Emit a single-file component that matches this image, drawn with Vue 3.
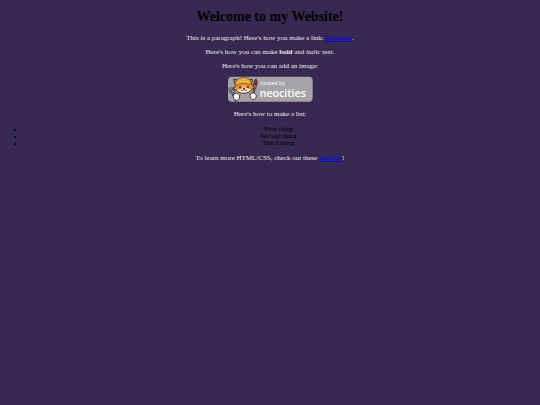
<script setup>
const things = ['First thing', 'Second thing', 'Third thing']
</script>

<template>
  <main class="page">
    <h1>Welcome to my Website!</h1>

    <p>This is a paragraph! Here's how you make a link: <a href="#neocities">Neocities</a>.</p>

    <p>Here's how you can make <strong>bold</strong> and <em>italic</em> text.</p>

    <p>Here's how you can add an image:</p>

    <!-- Hosted by Neocities badge -->
    <svg class="badge" viewBox="0 0 255 78" role="img" aria-label="Hosted by Neocities">
      <rect x="0" y="2" width="254" height="75" rx="12" fill="#a5a3a8" />
      <!-- fork -->
      <path d="M12 46 L25 76" stroke="#30303a" stroke-width="8" />
      <path d="M3 36 L7 47 Q13 54 19 45 L18 33 M10 34 L14 50" fill="none" stroke="#30303a" stroke-width="6" />
      <path d="M3 36 L7 47 Q13 52 19 45 L18 33 M10 34 L14 50 L23 74" fill="none" stroke="#a0a6b0" stroke-width="3" />
      <!-- brush -->
      <path d="M80 36 L73 65" stroke="#3d2228" stroke-width="6" />
      <path d="M80 35 L74 62" stroke="#a84a3c" stroke-width="3" />
      <path d="M77 24 L86 26 L83 38 L76 36 Z" fill="#8e8588" stroke="#302630" stroke-width="2" />
      <path d="M78 25 Q76 16 84 8 Q90 17 86 27 Z" fill="#8f2830" stroke="#4b1b23" stroke-width="2" />
      <!-- head -->
      <path d="M22 27 L17 10 L32 13 Q46 3 61 12 L73 10 L71 26 L79 35 L71 41 Q65 51 48 52 Q30 51 25 43 L15 37 L22 32 Z" fill="#ef942f" stroke="#4a2b25" stroke-width="3" />
      <path d="M47 29 L42 39 L28 42 Q33 50 48 50 Q65 49 69 40 L55 37 Z" fill="#fff2df" />
      <path d="M21 26 Q24 8 41 5 Q63 2 70 19 L66 26 Q43 18 25 29 Z" fill="#e2a93a" stroke="#6a4922" stroke-width="2" />
      <path d="M28 21 Q44 11 63 20 M33 13 Q48 7 57 12" fill="none" stroke="#f4cc60" stroke-width="2" />
      <circle cx="36" cy="34" r="3" fill="#342522" />
      <circle cx="60" cy="33" r="3" fill="#342522" />
      <path d="M45 36 L51 36 L48 40 Z M40 43 Q46 45 48 40 Q52 45 57 42" fill="#b64b3e" stroke="#4a2b25" stroke-width="2" />
      <!-- paws -->
      <path d="M17 54 Q27 47 35 57 Q37 70 26 74 Q13 70 17 54 Z" fill="#fff" stroke="#4a3932" stroke-width="3" />
      <path d="M68 52 Q79 47 85 57 Q85 71 74 71 Q63 66 68 52 Z" fill="#fff" stroke="#4a3932" stroke-width="3" />
      <text class="badge-small" x="97" y="28">hosted by</text>
      <text class="badge-name" x="95" y="62">neocities</text>
    </svg>

    <p>Here's how to make a list:</p>

    <ul>
      <li v-for="thing in things" :key="thing">{{ thing }}</li>
    </ul>

    <p>To learn more HTML/CSS, check out these <a href="#tutorials">tutorials</a>!</p>
  </main>
</template>

<style>
body {
  background-color: #382952;
}
</style>

<style scoped>
.page {
  padding: 9px 3px;
  color: #000;
  font-family: 'Liberation Serif', 'Times New Roman', serif;
  font-size: 7px;
  line-height: 8px;
  text-align: center;
}

h1 {
  margin: 0 0 9px;
  font-size: 14px;
  line-height: 16px;
}

p {
  margin: 6px 0;
  color: #eee;
}

a {
  color: #0000ee;
}

.badge {
  display: block;
  width: 85px;
  height: 26px;
  margin: 6px auto 8px;
}

.badge-small,
.badge-name {
  fill: #fff;
  font-family: 'Open Sans', 'Noto Sans', sans-serif;
}

.badge-small {
  font-size: 16px;
}

.badge-name {
  font-size: 32px;
  font-weight: 600;
}

ul {
  margin: 8px 0 7px;
  padding-left: 17px;
  line-height: 7px;
  list-style: none;
}

/* Small round bullet, hung in the list's left padding */
li::before {
  content: '';
  float: left;
  width: 2px;
  height: 2px;
  margin: 3px 4px 0 -6px;
  border-radius: 50%;
  background-color: #000;
}
</style>
